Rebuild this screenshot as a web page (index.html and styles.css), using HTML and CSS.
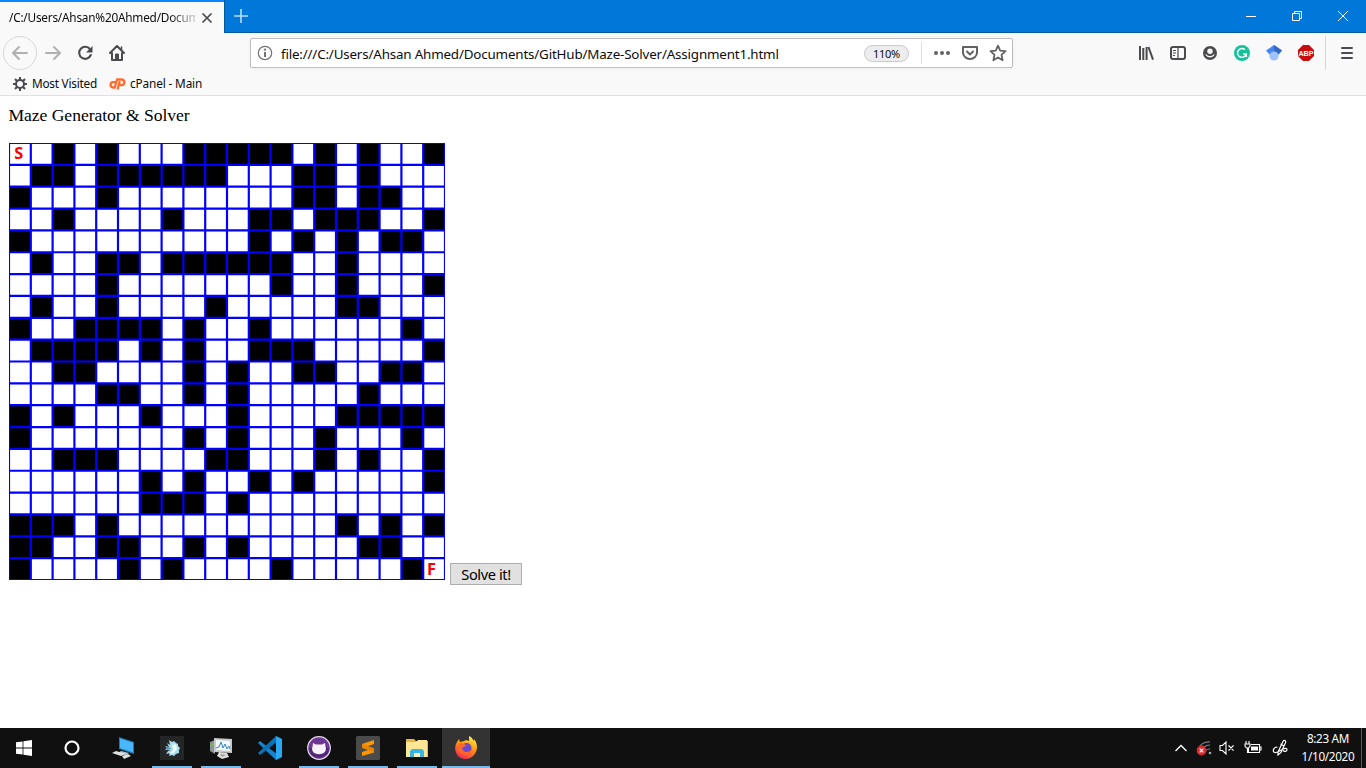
FILE: index.html
```
<!DOCTYPE html>
<html lang="en">
<head>
<meta charset="utf-8">
<title>Maze Generator &amp; Solver</title>
<link rel="stylesheet" href="styles.css">
</head>
<body>
<header class="tabbar">
  <div class="tab"><span class="tab-title">/C:/Users/Ahsan%20Ahmed/Docum</span>
    <svg class="tab-close" width="12" height="12" viewBox="0 0 12 12"><path d="M1.5 1.5l9 9M10.5 1.5l-9 9" stroke="#4a4a4f" stroke-width="1.7"/></svg>
  </div>
  <div class="newtab"><svg width="16" height="16" viewBox="0 0 16 16"><path d="M8 1v14M1 8h14" stroke="#b9dcfa" stroke-width="1.6"/></svg></div>
  <div class="window-buttons">
    <span><svg width="12" height="12"><path d="M1 6.5h10" stroke="#fff"/></svg></span>
    <span><svg width="12" height="12" fill="none" stroke="#fff"><path d="M1.5 3.5h7v7h-7zM3.5 3V1.500h7v7H9"/></svg></span>
    <span><svg width="12" height="12"><path d="M1 1l10 10M11 1L1 11" stroke="#fff"/></svg></span>
  </div>
</header>

<nav class="toolbar">
  <div class="nav-buttons">
    <span class="back"><svg width="18" height="18" viewBox="0 0 18 18" fill="none" stroke="#b1b1b2" stroke-width="2" stroke-linecap="round" stroke-linejoin="round"><path d="M16 9H2M8 3L2 9l6 6"/></svg></span>
    <svg class="forward" width="18" height="18" viewBox="0 0 18 18" fill="none" stroke="#b1b1b2" stroke-width="2" stroke-linecap="round" stroke-linejoin="round"><path d="M2 9h14M10 3l6 6-6 6"/></svg>
    <svg class="reload" width="16" height="16" viewBox="0 0 16 16"><path d="M13 4.200A6 6 0 1 0 13.800 10" fill="none" stroke="#4a4a4f" stroke-width="2.100" stroke-linecap="round"/><path d="M15.500 1v6.500H9z" fill="#4a4a4f"/></svg>
    <svg class="home" width="16" height="16" viewBox="0 0 16 16" fill="none" stroke="#4a4a4f" stroke-width="2" stroke-linecap="round" stroke-linejoin="round"><path d="M1 8l7-7 7 7M3 8v7h10V8"/><path d="M6.500 14V9h3v5z" fill="#4a4a4f" stroke-width="1"/><path d="M12.500 5V2" stroke-width="1.500"/></svg>
  </div>
  <div class="urlbar">
    <svg class="info" width="16" height="16" viewBox="0 0 16 16"><circle cx="8" cy="8" r="6.700" fill="none" stroke="#737373" stroke-width="1.200"/><path d="M8 7v5" stroke="#737373" stroke-width="2"/><circle cx="8" cy="4.600" r="1.200" fill="#737373"/></svg>
    <span class="url">file:///C:/Users/Ahsan Ahmed/Documents/GitHub/Maze-Solver/Assignment1.html</span>
    <span class="zoom">110%</span>
    <div class="url-actions">
      <svg width="18" height="16" viewBox="0 0 18 16" fill="#626266"><circle cx="3" cy="8" r="2"/><circle cx="9" cy="8" r="2"/><circle cx="15" cy="8" r="2"/></svg>
      <svg width="16" height="16" viewBox="0 0 16 16" fill="none" stroke="#626266" stroke-width="2" stroke-linecap="round" stroke-linejoin="round"><path d="M1 2h14v5.500a7 6.500 0 0 1-14 0z"/><path d="M5 6.500l3 3 3-3"/></svg>
      <svg width="18" height="18" viewBox="0 0 18 18" fill="none" stroke="#626266" stroke-width="1.800" stroke-linejoin="round"><path d="M9 1.700l2.200 4.900 5.300.6-4 3.600 1.100 5.400L9 13.500l-4.600 2.700 1.100-5.400-4-3.600 5.300-.6z"/></svg>
    </div>
  </div>
  <div class="extensions">
    <svg width="16" height="16" viewBox="0 0 16 16" stroke="#4a4a4f" stroke-width="2"><path d="M2 1v14M5.300 3v12M8.600 2v13M10.500 2l4.500 12.600" /></svg>
    <svg width="16" height="16" viewBox="0 0 16 16" fill="none" stroke="#4a4a4f" stroke-width="2"><rect x="1" y="2" width="14" height="12" rx="2"/><path d="M8 2v12M3 5.500h3M3 8h3M3 10.500h2" stroke-width="1.200"/></svg>
    <svg width="16" height="16" viewBox="0 0 16 16"><circle cx="8" cy="8" r="7" fill="#4a4a4f"/><circle cx="8" cy="6.200" r="2.700" fill="#f9f9fa"/><path d="M3.800 9.500c2 3 6.400 3 8.400 0" fill="none" stroke="#f9f9fa" stroke-width="1.300"/></svg>
    <svg width="16" height="16" viewBox="0 0 16 16"><circle cx="8" cy="8" r="8" fill="#15c39a"/><path d="M11 4.800A4.400 4.400 0 1 0 12.200 9H9.300M12.300 8.500V12" fill="none" stroke="#fff" stroke-width="1.500"/></svg>
    <svg width="16" height="16" viewBox="0 0 16 16"><path d="M8 0l8 5.500-4 4.500H4L0 5.500z" fill="#4285f4"/><path d="M8 0l8 5.500-4 4.500-4-3z" fill="#356ac3"/><circle cx="8" cy="11" r="4.600" fill="#a0c3ff"/></svg>
    <svg width="18" height="18" viewBox="0 0 18 18"><path d="M6 1h6l5 5v6l-5 5H6l-5-5V6z" fill="#c70d0d"/><text x="9" y="11.800" text-anchor="middle" class="abp">ABP</text></svg>
  </div>
  <div class="menu"><svg width="12" height="14" viewBox="0 0 12 14" stroke="#4a4a4f" stroke-width="2" stroke-linecap="round"><path d="M1 2h10M1 7h10M1 12h10"/></svg></div>
</nav>

<div class="bookmarks">
  <svg class="gear" width="14" height="14" viewBox="0 0 14 14" fill="none" stroke="#4a4a4f"><circle cx="7" cy="7" r="4" stroke-width="2"/><path d="M7 0v3M7 11v3M0 7h3M11 7h3M2 2l2.200 2.200M9.800 9.800L12 12M12 2L9.800 4.200M4.200 9.800L2 12" stroke-width="2"/></svg>
  <span class="most">Most Visited</span>
  <svg class="cp" width="17" height="12" viewBox="0 0 17 12" fill="none" stroke="#ff6c2c" stroke-width="2.300" stroke-linecap="round" stroke-linejoin="round"><path d="M6.500 4.200H4.200a2.600 2.600 0 0 0 0 5.300H5.800L8 1.500h5a2.900 2.900 0 0 1 0 5.700h-2.500M10.500 4.200L8.800 10.500"/></svg>
  <span class="cpanel">cPanel - Main</span>
</div>

<main class="page">
  <p class="heading">Maze Generator &amp; Solver</p>
  <div class="maze-row">
    <svg class="maze" viewBox="0 0 400 400" preserveAspectRatio="none">
      <g id="cells"></g>
      <path id="grid" fill="none" stroke="#00f" stroke-width="2"/>
      <text x="4.800" y="15" class="mark">S</text>
      <text x="383.400" y="395" class="mark">F</text>
    </svg>
    <button class="solve">Solve it!</button>
  </div>
</main>

<footer class="taskbar">
  <span class="task start"><svg width="16" height="16" viewBox="0 0 16 16" fill="#fff"><path d="M0 2.300l6.600-.9v6.200H0zM7.400 1.300L16 0v7.600H7.400zM0 8.400h6.600v6.200L0 13.700zM7.400 8.400H16V16l-8.600-1.300z"/></svg></span>
  <span class="task cortana"><svg width="16" height="16"><circle cx="8" cy="8" r="6.500" fill="none" stroke="#fff" stroke-width="2.200"/></svg></span>
  <span class="task"><svg width="24" height="24" viewBox="0 0 24 24"><path d="M8 1l15 5v12L8 13z" fill="#1b79bb"/><path d="M9 2.500l13 4.300v9.600L9 12z" fill="#48b8fb"/><path d="M10 15l8 2-3 2-8-2z" fill="#b9c4ca"/><path d="M5 15l10 3-5 2-9-3zM11 20l6-2 3 2-7 3z" fill="#dce1e4"/></svg></span>
  <span class="task open"><svg width="24" height="24" viewBox="0 0 24 24"><path d="M0 0h24v24H0z" fill="#242527"/><path d="M9 4l3 2 2-1 2 2 2 1v2l2 2-1 2v3l-3 1-2 2-2-1-3 1 1-3-4 1 2-3 3-1H5l2-2-2-2 4 1-2-4 3 2z" fill="#a9dcec"/><path d="M12 9l4-1 1 5-3 4-5 1 4-4z" fill="#ecfbff"/><path d="M6 11l6 1-5 2z" fill="#4796b5"/></svg></span>
  <span class="task open"><svg width="24" height="24" viewBox="0 0 24 24"><path d="M1 6l5-2v14l-5-3z" fill="#8d9491"/><path d="M1.500 8h2v2h-2z" fill="#65ce35"/><path d="M5 2l18 1v14L5 16z" fill="#c6cbca"/><path d="M7 4l14 1v10L7 14z" fill="#f3f9fb"/><path d="M7 12l3-1 2-5 2 6 2-4 2 5 2-3 1 3" fill="none" stroke="#3789bd"/><path d="M10 16l8 1 2 4-7 2-5-3z" fill="#dfdeda"/><path d="M11 18l6 1-4 2z" fill="#99a09d"/></svg></span>
  <span class="task"><svg width="24" height="24" viewBox="0 0 24 24"><path d="M0 7l2-2 18 14-2 5z" fill="#1683ce"/><path d="M0 17l2 2L20 5l-2-5z" fill="#0872b8"/><path d="M18 0l6 3v18l-6 3z" fill="#2aa9f3"/></svg></span>
  <span class="task open"><svg width="24" height="24" viewBox="0 0 24 24"><circle cx="12" cy="12" r="11.300" fill="#6e3795" stroke="#e5dce9" stroke-width="1.200"/><path d="M2 12a10 10 0 0 0 20 0z" fill="#522976"/><path d="M6 7l3 1.500h6L18 7l.3 3c2 5-1.300 8.200-6.300 8.200S3.700 15 5.700 10z" fill="#f7f2fb"/></svg></span>
  <span class="task open"><svg width="24" height="24" viewBox="0 0 24 24"><rect width="24" height="24" rx="1.500" fill="#4b4b4c"/><path d="M6 8l12-4v4l-7 2.400 7 2.200v3.800L6 20v-4l7-2.200-7-2.100z" fill="#ff9800"/><path d="M6 8l12 4.200v4L6 12z" fill="#e98300"/></svg></span>
  <span class="task open"><svg width="24" height="24" viewBox="0 0 24 24"><path d="M1 3h8l2 2h12v16H1z" fill="#e8b741"/><path d="M1 6h10l2-2h9v17H1z" fill="#ffe694"/><path d="M5 21v-6l2-2h10l2 2v6h-4v-4H9v4z" fill="#37b5e7"/><path d="M9 17h6v4H9z" fill="#fff0b1"/></svg></span>
  <span class="task open active"><svg width="24" height="24" viewBox="0 0 24 24"><defs><linearGradient id="fx" x1=".8" y1="0" x2=".3" y2="1"><stop offset="0" stop-color="#fff34f"/><stop offset=".45" stop-color="#ff980e"/><stop offset="1" stop-color="#f52756"/></linearGradient></defs><path d="M3 6l2-3 1 3 4-1 2-1 3 1V0c3 1 4 4 5 5V3c4 5 4 11 0 16-4 5-12 5-16 1-3-4-4-9-1-14z" fill="url(#fx)"/><circle cx="12.500" cy="12" r="5" fill="#6849cb"/><path d="M5 8c3-2 5 1 8 1-2 1-3 2-5 3 1 5 7 5 10 1-1 7-12 8-14 0z" fill="#ff6728"/></svg></span>
  <div class="tray">
    <svg class="chevron" width="14" height="10" viewBox="0 0 14 10"><path d="M1.500 8L7 2.500 12.500 8" fill="none" stroke="#fff" stroke-width="1.300"/></svg>
    <svg class="wifi" width="17" height="16" viewBox="0 0 17 16"><path d="M2 9A12 12 0 0 1 14 2M5 12a9 9 0 0 1 9-7M8 14a6 6 0 0 1 6-5" fill="none" stroke="#858585" stroke-width="1.200"/><circle cx="14" cy="13" r="1.300" fill="#aaa"/><circle cx="5.500" cy="10.500" r="4.900" fill="#df282d"/><path d="M3.700 8.700l3.600 3.600M7.300 8.700l-3.600 3.600" stroke="#fff" stroke-width="1.200"/></svg>
    <svg class="volume" width="16" height="16" viewBox="0 0 16 16" fill="none" stroke="#fff" stroke-width="1.100"><path d="M1 5.500h2.500L7 2v12l-3.500-3.500H1zM9.500 5.500l5 5M14.500 5.500l-5 5"/></svg>
    <svg class="battery" width="18" height="16" viewBox="0 0 18 16" fill="none" stroke="#fff" stroke-width="1.100"><path d="M7 4.500h8.500v8h-11V8M15.500 7H17v3h-1.500M2 1v3M5 1v3M1 4h5v2L4.500 8h-2L1 6zM3.500 8v4.500h1"/><path d="M7 6.500h7v4H7z" fill="#fff" stroke="none"/></svg>
    <svg class="pen" width="17" height="18" viewBox="0 0 17 18" fill="none" stroke="#fff" stroke-width="1.200"><path d="M6 13L11 2.500c1-2 3.500-1 2.500 1.200L9 13.500 6 16zM5.500 8C1 8 0 13 3 13.500c3 .5 5-2 8-3.500 2-1 4-1 4 .7 0 2-3 2-4 .8M8.500 5L12 7"/></svg>
    <div class="clock"><span>8:23 AM</span><span>1/10/2020</span></div>
    <i class="desktop-edge"></i>
  </div>
</footer>
<script src="maze.js"></script>
</body>
</html>
```
FILE: styles.css
```
* { box-sizing: border-box; }
body { margin: 0; width: 1366px; height: 768px; overflow: hidden; display: flex; flex-direction: column; background: #fff; font-family: "Noto Sans", sans-serif; color: #0c0c0d; }
svg { display: block; flex: none; }
.tabbar { height: 33px; flex: none; display: flex; background: #0078d9; }
.tab { width: 224px; height: 33px; background: #f9f9fa; border-top: 2px solid #0a84ff; display: flex; align-items: center; padding: 0 0 0 9px; }
.tab-title { width: 187px; overflow: hidden; white-space: nowrap; font-size: 11.8px; letter-spacing: -0.22px; line-height: 18px; padding-bottom: 2px; -webkit-mask-image: linear-gradient(90deg, #000 160px, transparent 192px); mask-image: linear-gradient(90deg, #000 160px, transparent 192px); }
.tab-close { margin-left: 5px; }
.newtab { flex: 1; border-left: 1px solid #005a9e; border-bottom: 1px solid #005a9e; padding: 8px 0 0 8px; }
.window-buttons { display: flex; border-bottom: 1px solid #005a9e; }
.window-buttons span { width: 46px; display: flex; justify-content: center; align-items: center; }
.toolbar { height: 40px; flex: none; background: #f9f9fa; display: flex; align-items: center; }
.nav-buttons { width: 250px; height: 40px; display: flex; align-items: center; padding-left: 3px; }
.back { width: 34px; height: 34px; border: 1px solid #d7d7db; border-radius: 50%; display: flex; align-items: center; justify-content: center; }
.forward { margin-left: 7px; }
.reload { margin-left: 15px; }
.home { margin-left: 16px; }
.urlbar { width: 763px; height: 30px; border: 1px solid #bebebe; border-radius: 2px; background: #fff; display: flex; align-items: center; padding-left: 6px; box-shadow: 0 1px 4px rgba(0,0,0,.05); }
.url { width: 589px; padding: 2px 0 0 8px; white-space: nowrap; font-size: 13.4px; letter-spacing: -0.18px; }
.zoom { width: 45px; height: 17px; border: 1px solid #cacacc; border-radius: 9px; background: #ededf0; font-size: 11px; line-height: 16px; text-align: center; letter-spacing: -.3px; margin-left: 2px; }
.url-actions { height: 22px; margin-left: 12px; border-left: 1px solid #e0e0e2; display: flex; align-items: center; gap: 11px; padding-left: 11px; }
.extensions { display: flex; align-items: center; gap: 16px; margin-left: 125px; width: 187px; }
.extensions svg:last-child { margin-left: -1px; }
.abp { font: bold 7.2px "Liberation Sans", sans-serif; fill: #fff; }
.menu { height: 34px; border-left: 1px solid #d7d7db; display: flex; align-items: center; padding-left: 15px; }
.bookmarks { height: 23px; flex: none; background: #f9f9fa; border-bottom: 1px solid #e1e1e2; display: flex; align-items: center; font-size: 11.8px; line-height: 18px; padding: 0 0 1px 13px; white-space: nowrap; }
.most { width: 81px; padding: 0 0 2px 5px; letter-spacing: -.24px; }
.cp { margin-left: 1px; }
.cpanel { padding: 0 0 2px 4px; letter-spacing: -.14px; }
.page { height: 632px; flex: none; padding: 9px 0 0 9px; font-family: "Liberation Serif", serif; }
.heading { margin: 0 0 18px -.5px; font-size: 17.6px; line-height: 20px; letter-spacing: -.05px; color: #000; }
.maze-row { display: flex; gap: 5px; }
.maze { width: 436px; height: 437px; }
.mark { font: bold 15px "Open Sans", sans-serif; fill: #f00; }
.solve { width: 72px; height: 22px; margin-top: 420px; padding: 1px 0 0; border: 1px solid #adadad; background: #e1e1e1; color: #000; font: 14.6px/19px "Noto Sans", sans-serif; letter-spacing: -.4px; }
.taskbar { height: 40px; flex: none; background: #101010; display: flex; }
.task { width: 48px; height: 40px; margin-right: 1px; display: flex; align-items: center; justify-content: center; }
.start { margin-right: 0; }
.cortana { margin-right: 3px; }
.open { background: linear-gradient(#76b9ed, #76b9ed) center bottom / 40px 2px no-repeat; }
.active { background: linear-gradient(#76b9ed, #76b9ed) center bottom / 48px 2px no-repeat #333; }
.tray { margin-left: auto; display: flex; align-items: center; color: #fff; }
.wifi { margin-left: 8px; }
.volume { margin-left: 6px; }
.battery { margin-left: 9px; }
.pen { margin-left: 10px; }
.clock { width: 70px; display: flex; flex-direction: column; text-align: center; font-size: 11.7px; line-height: 18px; letter-spacing: -.3px; margin: 0 1px 3px 4px; }
.desktop-edge { width: 1px; height: 40px; background: #5b5b5b; margin: 0 4px 0 -3px; }
```
FILE: maze.js
```
const walls = [
  [2,4,8,9,10,11,12,14,16,19],
  [1,2,4,5,6,7,8,9,13,14,16],
  [0,4,13,14,16,17],
  [2,7,11,12,14,15,16,19],
  [0,11,13,15,17,18],
  [1,4,5,7,8,9,10,11,12,15],
  [4,12,15,19],
  [1,4,9,15,16],
  [0,3,4,5,6,8,11,18],
  [1,2,3,4,6,8,11,12,13,19],
  [2,3,8,10,13,14,17,18],
  [4,5,8,10,16],
  [0,2,6,10,15,16,17,18,19],
  [0,8,10,14,18],
  [2,3,4,9,10,14,16,19],
  [6,8,11,13,19],
  [6,7,8,10],
  [0,1,2,4,15,17,19],
  [0,1,4,5,8,10,16,17],
  [0,5,7,12,18]
];
const cells = document.getElementById('cells');
walls.forEach((row, y) => row.forEach(x => {
  const r = document.createElementNS('http://www.w3.org/2000/svg', 'rect');
  r.setAttribute('x', x * 20);
  r.setAttribute('y', y * 20);
  r.setAttribute('width', 20);
  r.setAttribute('height', 20);
  cells.appendChild(r);
}));
let d = '';
for (let i = 0; i <= 400; i += 20) d += `M${i} 0V400M0 ${i}H400`;
document.getElementById('grid').setAttribute('d', d);
```
